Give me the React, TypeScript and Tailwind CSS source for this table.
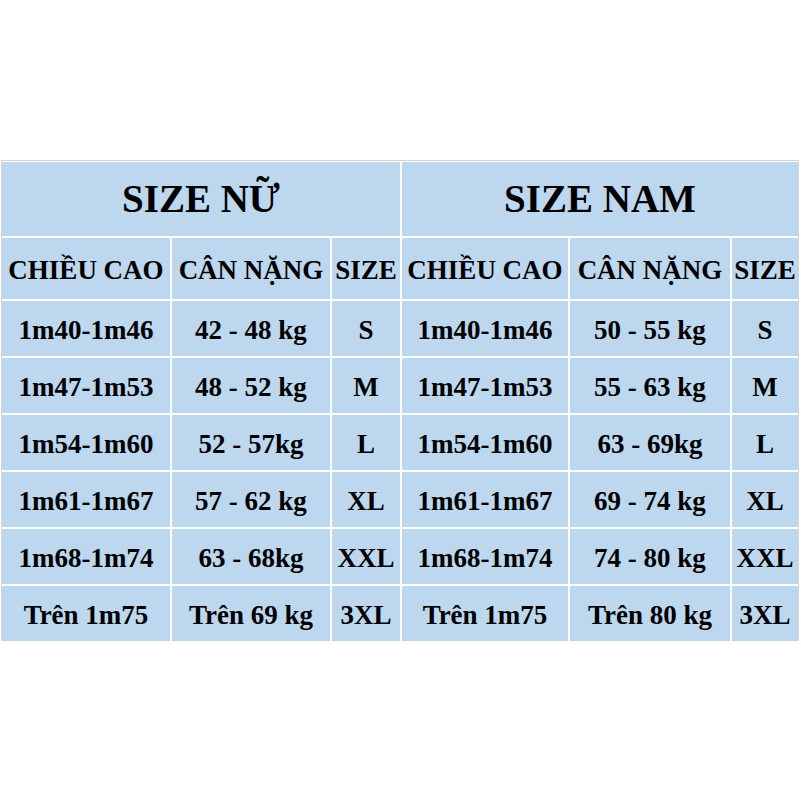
import React from "react";

const rowsNu = [
  ["1m40-1m46", "42 - 48 kg", "S"],
  ["1m47-1m53", "48 - 52 kg", "M"],
  ["1m54-1m60", "52 - 57kg", "L"],
  ["1m61-1m67", "57 - 62 kg", "XL"],
  ["1m68-1m74", "63 - 68kg", "XXL"],
  ["Trên 1m75", "Trên 69 kg", "3XL"],
];
const rowsNam = [
  ["1m40-1m46", "50 - 55 kg", "S"],
  ["1m47-1m53", "55 - 63 kg", "M"],
  ["1m54-1m60", "63 - 69kg", "L"],
  ["1m61-1m67", "69 - 74 kg", "XL"],
  ["1m68-1m74", "74 - 80 kg", "XXL"],
  ["Trên 1m75", "Trên 80 kg", "3XL"],
];

function Cell({ children, className = "" }: { children: React.ReactNode; className?: string }) {
  return (
    <div className={"bg-[#bdd7ee] flex items-center justify-center whitespace-nowrap text-black " + className}>
      {children}
    </div>
  );
}

export default function App() {
  return (
    <div className="w-[801px] h-[801px] bg-white pt-[160px] pl-[1px]" style={{ fontFamily: '"Liberation Serif", "Times New Roman", serif' }}>
      <div className="w-[798px] border border-[#d4d4d4] border-b-0 pt-[1px] bg-white">
        <div className="grid grid-cols-[168px_158px_68px_166px_160px_66px] grid-rows-[74px_61px_55px_55px_55px_55px_55px_55px] gap-[2px] font-bold">
          <Cell className="col-span-3 text-[39px] pt-[1px]">SIZE NỮ</Cell>
          <Cell className="col-span-3 text-[39px] pt-[1px]">SIZE NAM</Cell>
          <Cell className="text-[27px] pt-[3px]">CHIỀU CAO</Cell>
          <Cell className="text-[27px] pt-[3px]">CÂN NẶNG</Cell>
          <Cell className="text-[27px] pt-[3px]">SIZE</Cell>
          <Cell className="text-[27px] pt-[3px]">CHIỀU CAO</Cell>
          <Cell className="text-[27px] pt-[3px]">CÂN NẶNG</Cell>
          <Cell className="text-[27px] pt-[3px]">SIZE</Cell>
          {rowsNu.map((r, i) => (
            <React.Fragment key={i}>
              <Cell className="text-[27px] pt-[3px]">{r[0]}</Cell>
              <Cell className="text-[27px] pt-[3px]">{r[1]}</Cell>
              <Cell className="text-[27px] pt-[3px]">{r[2]}</Cell>
              <Cell className="text-[27px] pt-[3px]">{rowsNam[i][0]}</Cell>
              <Cell className="text-[27px] pt-[3px]">{rowsNam[i][1]}</Cell>
              <Cell className="text-[27px] pt-[3px]">{rowsNam[i][2]}</Cell>
            </React.Fragment>
          ))}
        </div>
      </div>
    </div>
  );
}
